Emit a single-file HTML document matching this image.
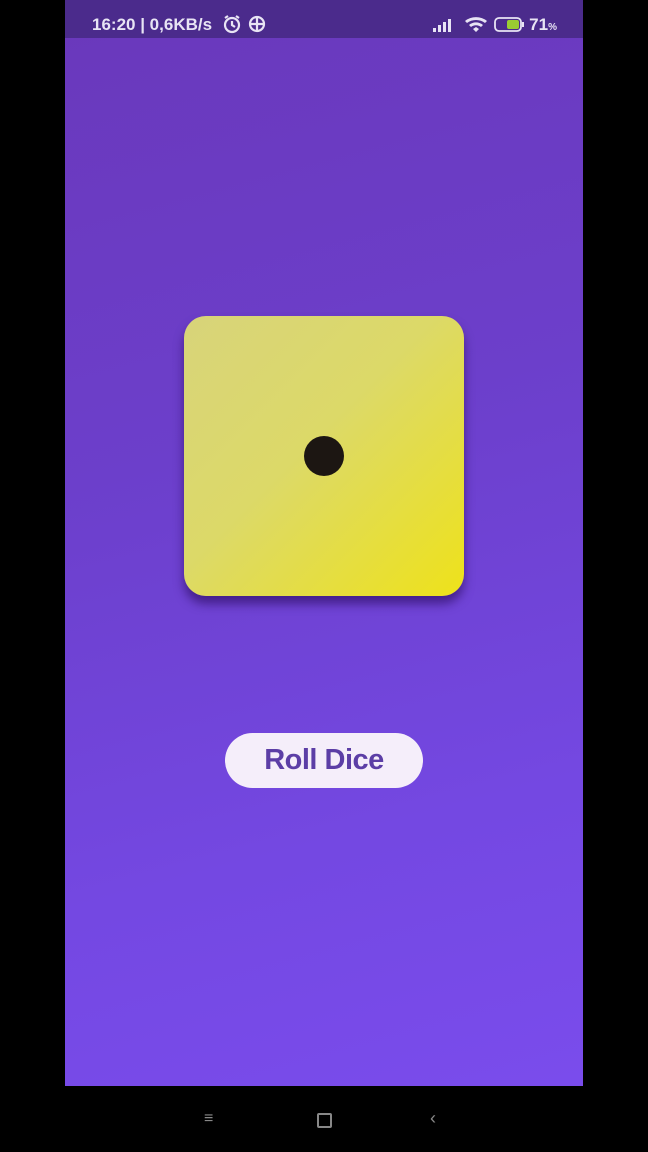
<!DOCTYPE html>
<html><head><style>
html,body{margin:0;padding:0;background:#000;width:648px;height:1152px;overflow:hidden;font-family:"Liberation Sans",sans-serif}
#app{position:absolute;left:65px;top:0;width:518px;height:1086px;background:linear-gradient(165deg,#6a38bb 0%,#6c3fcb 40%,#7448e2 75%,#7a4cec 100%)}
#sb{position:absolute;left:0;top:0;width:518px;height:38px;background:#4b2b8c;color:#e8e4f4;font-size:17px;font-weight:bold}
#die{position:absolute;left:119px;top:316px;width:280px;height:280px;border-radius:22px;background:linear-gradient(135deg,#d8d47a 0%,#dcd968 45%,#eee21a 100%);box-shadow:0 8px 10px rgba(40,10,90,.6)}
#dot{position:absolute;left:120px;top:120px;width:40px;height:40px;border-radius:50%;background:#1c1612}
#btn{position:absolute;left:160px;top:733px;width:198px;height:55px;border-radius:28px;background:#f5eefa;color:#5c3ea6;font-size:29px;font-weight:bold;text-align:center;line-height:55px;letter-spacing:-0.5px}
#nav{position:absolute;left:0;top:1086px;width:648px;height:66px;background:#000}
</style></head><body>
<div id="app">
<div id="sb"><span style="position:absolute;left:27px;top:15px">16:20 | 0,6KB/s</span>
<svg style="position:absolute;left:157px;top:14px" width="44" height="20" viewBox="0 0 44 20" fill="none" stroke="#e8e4f4" stroke-width="2.2"><circle cx="10" cy="11" r="7"/><path d="M10 7v4l3 2M3 4l3-2M17 4l-3-2"/><circle cx="35" cy="10" r="7"/><path d="M28 10h14M35 3v14"/></svg>
<svg style="position:absolute;left:368px;top:15px" width="110" height="18" viewBox="0 0 110 18" fill="#e8e4f4"><rect x="0" y="13" width="3" height="4"/><rect x="5" y="10" width="3" height="7"/><rect x="10" y="7" width="3" height="10"/><rect x="15" y="4" width="3" height="13"/><path d="M32 6a16 14 0 0 1 22 0l-2 2a13 11 0 0 0-18 0zM36 10a10 9 0 0 1 14 0l-2 2a7 6 0 0 0-10 0zM40 14l3-2 3 2-3 3z"/><rect x="62" y="3" width="26" height="13" rx="4" fill="none" stroke="#e8e4f4" stroke-width="1.8"/><rect x="74" y="5" width="12" height="9" rx="2" fill="#9acd32"/><rect x="89" y="7" width="2" height="5"/></svg>
<span style="position:absolute;right:26px;top:15px">71<small style="font-size:10px">%</small></span></div>
<div id="die"><div id="dot"></div></div>
<div id="btn">Roll Dice</div>
</div>
<div id="nav">
<span style="position:absolute;left:204px;top:24px;color:#888;font-size:16px">≡</span>
<div style="position:absolute;left:317px;top:27px;width:11px;height:11px;border:2px solid #888;border-radius:2px"></div>
<span style="position:absolute;left:430px;top:22px;color:#888;font-size:18px">‹</span>
</div>
</body></html>
